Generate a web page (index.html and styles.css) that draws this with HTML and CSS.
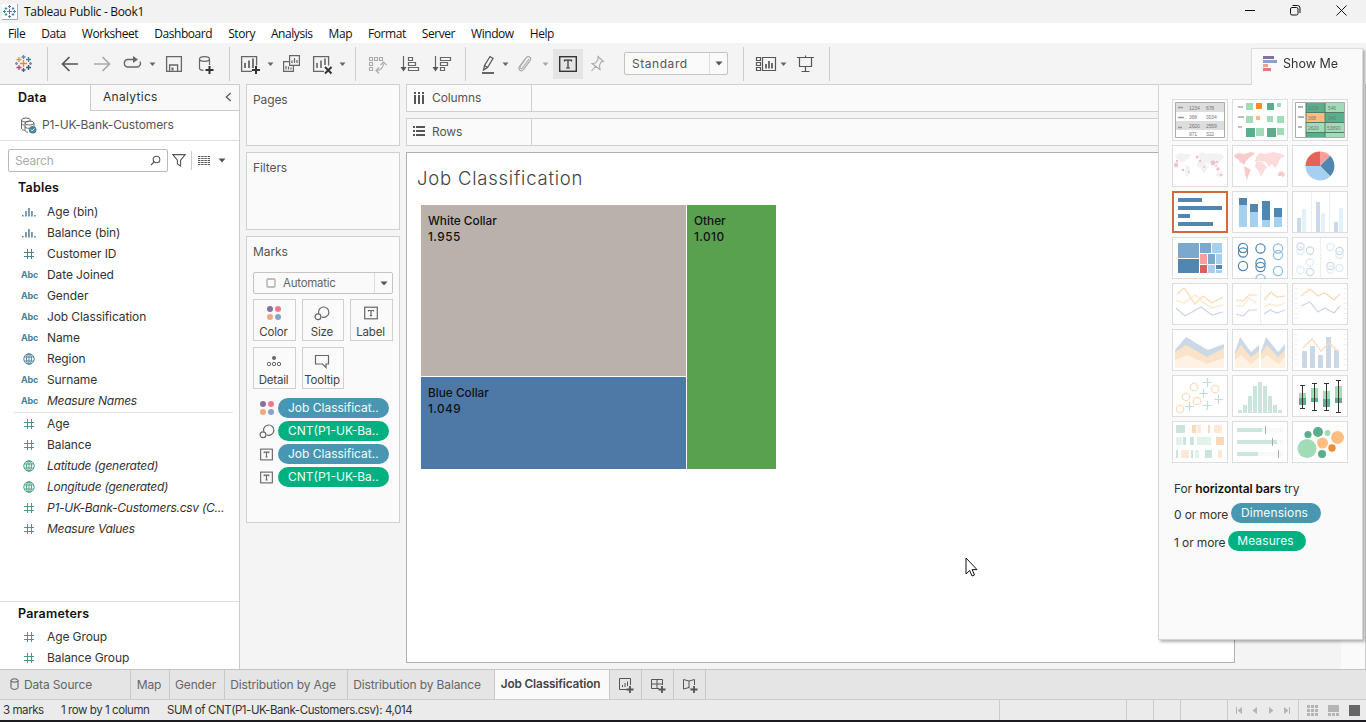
FILE: index.html
```html
<!DOCTYPE html>
<html lang="en">
<head>
<meta charset="utf-8">
<title>Tableau Public - Book1</title>
<link rel="stylesheet" href="styles.css">
</head>
<body>
<svg class="defs" width="0" height="0">
  <symbol id="hash" viewBox="0 0 12 12"><path d="M4.5 1v10M8.5 1v10M1 4.5h10M1 8.5h10" fill="none" stroke="currentColor"/></symbol>
  <symbol id="globe" viewBox="0 0 12 12"><g fill="none" stroke="currentColor"><circle cx="6" cy="6" r="5.2"/><ellipse cx="6" cy="6" rx="2.4" ry="5.2"/><path d="M1.4 4h9.200M1.400 8h9.200M6 1v10" stroke-width=".9"/></g></symbol>
  <symbol id="bins" viewBox="0 0 14 12"><path d="M0 9h1.500v1.500H0zM3.200 5h1.500v5.500H3.200zM6.200 2h1.500v8.500H6.200zM9.200 5h1.500v5.500H9.200zM12.200 9h1.500v1.500h-1.500z" fill="currentColor"/></symbol>
  <symbol id="dots" viewBox="0 0 16 16"><circle cx="4" cy="4" r="3" fill="#86719a"/><circle cx="12" cy="4" r="3" fill="#f2788b"/><circle cx="4" cy="12" r="3" fill="#f0a884"/><circle cx="12" cy="12" r="3" fill="#85a3cb"/></symbol>
  <symbol id="size" viewBox="0 0 16 16"><g fill="none" stroke="#666" stroke-width="1.200"><path d="M4.700 8.600A5.200 5.200 0 1 1 8 12.100"/><circle cx="4" cy="11.800" r="2.900"/></g></symbol>
  <symbol id="label" viewBox="0 0 14 14"><rect x=".7" y="1.200" width="12.600" height="11.600" fill="none" stroke="#666" stroke-width="1.200"/><path d="M4.500 5.600V4.500h5v1.100M7 4.500v5.200M5.900 9.700h2.200" fill="none" stroke="#666" stroke-width="1.200"/></symbol>
  <symbol id="caret" viewBox="0 0 8 5"><path d="M.5.500h7L4 4.500z" fill="currentColor"/></symbol>
</svg>
<div class="app">
  <header class="titlebar">
    <svg class="app-icon" viewBox="0 0 16 16" width="16" height="16"><rect width="15" height="15" fill="#fff"/><path d="M15.500 0v15.500H0" fill="none" stroke="#aaa"/><path d="M7.500 5v5M5 7.500h5M7.500 1v3M6 2.500h3M7.500 11v3M6 12.500h3M1 7.500h3M2.500 6v3M11 7.500h3M12.500 6v3M4 3v3M2.700 4.500h2.600M11 3v3M9.700 4.500h2.600M4 9v3M2.700 10.500h2.600M11 9v3M9.700 10.500h2.600" stroke="#4a87a8"/></svg>
    <span class="title">Tableau Public - Book1</span>
    <svg class="win" viewBox="1240 0 126 23" width="126" height="23" fill="none" stroke="#111"><path d="M1245 10.500h10M1336.500 5.500l10 10M1346.500 5.500l-10 10"/><rect x="1290.500" y="7.500" width="7.500" height="7.500" rx="1.500"/><path d="M1292.500 5.500h5q2.500 0 2.500 2.500v5"/></svg>
  </header>
  <nav class="menu"><span>File</span><span>Data</span><span>Worksheet</span><span>Dashboard</span><span>Story</span><span>Analysis</span><span>Map</span><span>Format</span><span>Server</span><span>Window</span><span>Help</span></nav>

  <div class="toolbar">
    <svg class="sep" viewBox="0 43 47 41" width="47" height="41"><g stroke-width="1.300"><path d="M23.500 60v7M20 63.500h7" stroke="#e8863a"/><path d="M23.500 55v4M21.500 57h4" stroke="#5d89b0"/><path d="M23.500 68v4M21.500 70h4" stroke="#525a86"/><path d="M19 57v5M16.500 59.500h5" stroke="#e49a47"/><path d="M28.500 57v5M26 59.500h5" stroke="#4a7f94"/><path d="M19 65v5M16.500 67.500h5" stroke="#bf4661"/><path d="M28.500 65v5M26 67.500h5" stroke="#345487"/><path d="M16.500 62v3M15 63.500h3M30.500 62v3M29 63.500h3" stroke="#838da9"/></g></svg>
    <svg viewBox="48 43 44 41" width="44" height="41" fill="none" stroke="#555" stroke-width="1.700"><path d="M78 64H63M69.500 57l-7 7 7 7"/></svg>
    <svg viewBox="92 43 24 41" width="24" height="41" fill="none" stroke="#aaa" stroke-width="1.700"><path d="M94 64h15M102.500 57l7 7-7 7"/></svg>
    <svg viewBox="116 43 44 41" width="44" height="41" fill="none" stroke="#666" stroke-width="1.300"><path d="M134 59.500h-6.500a3.800 3.800 0 0 0 0 7.500h9a3.700 3.700 0 0 0 3.500-5.500"/><path d="M133 56l5 3.500-5 3.500z" fill="#666" stroke="none"/><path d="M149.500 62.500h6l-3 3.500z" fill="#666" stroke="none"/></svg>
    <svg viewBox="160 43 28 41" width="28" height="41" fill="none" stroke="#666" stroke-width="1.300"><path d="M166.600 56.600h14.800v14.800h-14.800zM169.600 71v-6h8v6"/><path d="M172.500 67.500v3" stroke-width="2"/></svg>
    <svg class="sep" viewBox="188 43 41 41" width="41" height="41" fill="none" stroke="#666" stroke-width="1.200"><ellipse cx="204.500" cy="59" rx="5" ry="2.300"/><path d="M199.500 59v9c0 1.500 1.500 2.300 4 2.300M209.500 59v6"/><path d="M209.500 66v8M205.500 70h8" stroke="#333" stroke-width="2"/></svg>
    <svg viewBox="230 43 48 41" width="48" height="41" fill="none" stroke="#666" stroke-width="1.300"><path d="M252 71.400h-10.400V56.600h15v9"/><path d="M245 63v5M249 60.500V68M253 58.500V68" stroke-width="1.800"/><path d="M256 66v8M252 70h8" stroke="#333" stroke-width="2"/><path d="M267.500 62.500h6l-3 3.500z" fill="#666" stroke="none"/></svg>
    <svg viewBox="278 43 30 41" width="30" height="41" fill="none" stroke="#666" stroke-width="1.200"><path d="M289 61.600h-5.400v9.800h9.800V66M289.600 55.600h9.800v9.800h-9.800z"/><path d="M292 63v-2.500M294.500 63v-5M297 63v-3M286 69.500V66M288.500 69.500v-3M291 69.500v-2"/></svg>
    <svg class="sep" viewBox="308 43 47 41" width="47" height="41" fill="none" stroke="#666" stroke-width="1.300"><path d="M324 71.400h-10.400V56.600h15v9"/><path d="M317 63v5M321 60.500V68M325 58.500V65" stroke-width="1.600"/><path d="M325 67l6.500 6.500M331.500 67l-6.500 6.500" stroke="#333" stroke-width="2"/><path d="M339.500 62.500h6l-3 3.500z" fill="#666" stroke="none"/></svg>
    <svg viewBox="356 43 38 41" width="38" height="41" fill="none" stroke="#aaa" stroke-width="1.100"><path d="M369.500 57.500h3v3h-3zM374.500 57.500h3v3h-3zM379.500 57.500h3v3h-3zM369.500 62.500h3v3h-3zM369.500 67.500h3v3h-3zM376.500 70.500c4 0 7-3 7-7"/><path d="M379 67.500l-3 3 3 3M380.500 65l3-3 3 3"/></svg>
    <svg viewBox="394 43 32 41" width="32" height="41" fill="none" stroke="#666" stroke-width="1.200"><path d="M403.500 56v13M408.500 57.500h4v3h-4zM408.500 62.500h7v3h-7zM408.500 67.500h10v3h-10z"/><path d="M400.500 67h6l-3 4.500z" fill="#555" stroke="none"/></svg>
    <svg class="sep" viewBox="426 43 39 41" width="39" height="41" fill="none" stroke="#666" stroke-width="1.200"><path d="M435.500 56v13M440.500 57.500h10v3h-10zM440.500 62.500h7v3h-7zM440.500 67.500h4v3h-4z"/><path d="M432.500 67h6l-3 4.500z" fill="#555" stroke="none"/></svg>
    <svg viewBox="466 43 46 41" width="46" height="41" fill="none" stroke="#555" stroke-width="1.200"><path d="M483.500 70l1-4.500 5.500-9 3 2-5.500 9zM484.500 65.500l3 2"/><path d="M482 73h12" stroke="#666" stroke-width="2"/><path d="M502.500 62.500h6l-3 3.500z" fill="#666" stroke="none"/></svg>
    <svg viewBox="512 43 41 41" width="41" height="41" fill="none" stroke="#aaa" stroke-width="1.200"><path d="M529 59l-6.500 9c-1.200 1.500-3.500 0-2.300-1.700l6-8.500c2-2.600 5.700-.2 4 2.500l-6.500 9c-2.500 3-6.300.6-4.200-2.600l5.500-7.700"/><path d="M542.500 62.500h6l-3 3.500z" fill="#aaa" stroke="none"/></svg>
    <div class="active-tool"><svg viewBox="0 0 18 16" width="18" height="16" fill="none" stroke="#333" stroke-width="1.400"><rect x=".7" y=".7" width="16.600" height="14.600"/><path d="M5.500 5.500V4.200h7v1.300M9 4.200v8M7 12h4" stroke-width="1.200"/></svg></div>
    <svg viewBox="583 43 41 41" width="41" height="41" fill="none" stroke="#aaa" stroke-width="1.100"><path d="M598 56.500l5.500 5-2.500.5-1.500 3.500.5 4-8-6 3.500-.5 2.500-3.500zM595.500 66.500l-4 4.500"/></svg>
    <div class="fit-select"><span>Standard</span><i><svg width="8" height="5"><use href="#caret"/></svg></i></div>
    <div class="sep spacer"></div>
    <svg class="sep" viewBox="744 43 85 41" width="85" height="41" fill="none" stroke="#555" stroke-width="1.200"><path d="M756.500 57.500h4v3h-4zM756.500 62.500h4v3h-4zM756.500 67.500h4v3h-4zM762.500 57.500h13v13h-13z"/><path d="M766 64v4.500M769 61v7.500M772 63v5.500" stroke-width="1.700"/><path d="M780.500 62.500h6l-3 3.500z" fill="#666" stroke="none"/><path d="M797 57.500h17M799.500 57.500v9h12v-9M805.500 55.500v2M805.500 66.500v5M801.500 71.500h8"/></svg>
  </div>

  <main class="workspace">
    <aside class="data-pane">
      <div class="pane-tabs"><b>Data</b><div class="analytics"><span>Analytics</span><svg width="7" height="10" viewBox="0 0 8 11"><path d="M6.500 1l-5 4.500 5 4.500" fill="none" stroke="#555" stroke-width="1.400"/></svg></div></div>
      <div class="source"><svg width="17" height="17" viewBox="0 0 17 17" fill="none" stroke="#666"><ellipse cx="6" cy="3" rx="4.500" ry="2"/><path d="M1.500 3v8c0 1.500 1.500 2 3 2.500M1.500 6c0 1.500 1.500 2 3 2.300"/><ellipse cx="9.500" cy="6" rx="4.500" ry="2"/><path d="M5 6v7c0 1.300 1 2 3 2.400M14 6v3M5 9.500c0 1 1.500 1.800 4 1.800"/><circle cx="12.700" cy="12.700" r="3.800" fill="#3f86a3" stroke="none"/><path d="M11 12.700l1.300 1.300 2.200-2.500" stroke="#fff"/></svg><span>P1-UK-Bank-Customers</span></div>
      <div class="search-row">
        <div class="search"><span>Search</span><svg width="11" height="11" viewBox="0 0 11 11" fill="none" stroke="#555" stroke-width="1.100"><circle cx="6.500" cy="4.500" r="3.300"/><path d="M4 7L1 10"/></svg></div>
        <svg class="funnel" width="14" height="13" viewBox="0 0 14 13" fill="none" stroke="#555" stroke-width="1.100"><path d="M.8.600h12.400L8.600 6.200V12L5.400 10V6.200z"/></svg>
        <svg class="list-icon" width="12" height="11" viewBox="0 0 12 11" stroke="#555" stroke-dasharray="2.400 .8"><path d="M0 1.500h12M0 3.500h12M0 5.500h12M0 7.500h12M0 9.500h12"/></svg>
        <svg class="view-caret" width="8" height="5"><use href="#caret"/></svg>
      </div>
      <h2>Tables</h2>
      <ul class="fields dims">
        <li><svg class="wide"><use href="#bins"/></svg>Age (bin)</li>
        <li><svg class="wide"><use href="#bins"/></svg>Balance (bin)</li>
        <li><svg><use href="#hash"/></svg>Customer ID</li>
        <li><b>Abc</b>Date Joined</li>
        <li><b>Abc</b>Gender</li>
        <li><b>Abc</b>Job Classification</li>
        <li><b>Abc</b>Name</li>
        <li><svg><use href="#globe"/></svg>Region</li>
        <li><b>Abc</b>Surname</li>
        <li><b>Abc</b><em>Measure Names</em></li>
      </ul>
      <ul class="fields meas">
        <li><svg><use href="#hash"/></svg>Age</li>
        <li><svg><use href="#hash"/></svg>Balance</li>
        <li><svg><use href="#globe"/></svg><em>Latitude (generated)</em></li>
        <li><svg><use href="#globe"/></svg><em>Longitude (generated)</em></li>
        <li><svg><use href="#hash"/></svg><em>P1-UK-Bank-Customers.csv (C...</em></li>
        <li><svg><use href="#hash"/></svg><em>Measure Values</em></li>
      </ul>
      <section class="params">
        <h2>Parameters</h2>
        <ul class="fields meas-params">
          <li><svg><use href="#hash"/></svg>Age Group</li>
          <li><svg><use href="#hash"/></svg>Balance Group</li>
        </ul>
      </section>
    </aside>

    <div class="cards">
      <section class="card pages">Pages</section>
      <section class="card filters">Filters</section>
      <section class="card marks">Marks
        <div class="mark-type"><svg width="10" height="10"><rect x="1" y="1" width="8" height="8" rx="1" fill="none" stroke="#aaa" stroke-width="1.300"/></svg><span>Automatic</span><i><svg width="8" height="5"><use href="#caret"/></svg></i></div>
        <div class="mark-buttons">
          <button><svg width="16" height="16"><use href="#dots"/></svg>Color</button>
          <button><svg width="16" height="16"><use href="#size"/></svg>Size</button>
          <button><svg width="14" height="16"><use href="#label"/></svg>Label</button>
          <button><svg width="16" height="16" fill="none" stroke="#666"><circle cx="8" cy="5" r="2" fill="#666" stroke="none"/><circle cx="3" cy="11" r="1.700"/><circle cx="8" cy="11" r="1.700"/><circle cx="13" cy="11" r="1.700"/></svg>Detail</button>
          <button><svg width="16" height="16" fill="none" stroke="#666" stroke-width="1.200"><path d="M1.500 2.500h13v8.500h-2.500v3.500L8.500 11h-7z"/></svg>Tooltip</button>
        </div>
        <div class="pills">
          <div><svg width="16" height="16"><use href="#dots"/></svg><span class="pill blue">Job Classificat..</span></div>
          <div><svg width="16" height="16"><use href="#size"/></svg><span class="pill green">CNT(P1-UK-Ba..</span></div>
          <div><svg width="15" height="13"><use href="#label"/></svg><span class="pill blue after-label">Job Classificat..</span></div>
          <div><svg width="15" height="13"><use href="#label"/></svg><span class="pill green after-label">CNT(P1-UK-Ba..</span></div>
        </div>
      </section>
    </div>

    <div class="view-area">
      <div class="shelf"><label><svg width="12" height="13" viewBox="0 0 12 13"><path d="M2 0v2M6 0v2M10 0v2M2 3v9M6 3v9M10 3v9" stroke="#555" stroke-width="2"/></svg>Columns</label></div>
      <div class="shelf"><label><svg width="12" height="12" viewBox="0 0 12 12"><path d="M0 1h2M0 5h2M0 9h2M3 1h9M3 5h9M3 9h9" stroke="#555" stroke-width="2"/></svg>Rows</label></div>
      <section class="sheet">
        <h1>Job Classification</h1>
        <div class="treemap">
          <div class="white-collar">White Collar<br><span>1.955</span></div>
          <div class="other">Other<br><span>1.010</span></div>
          <div class="blue-collar">Blue Collar<br><span>1.049</span></div>
        </div>
      </section>
    </div>
    <div class="gutter"></div>
  </main>

  <footer class="sheet-tabs">
    <span class="ds"><svg width="9" height="12" viewBox="0 0 9 12" fill="none" stroke="#555"><ellipse cx="4.500" cy="2.500" rx="3.500" ry="1.700"/><path d="M1 2.500v7c0 2.400 7 2.400 7 0v-7"/></svg>Data Source</span>
    <span class="map">Map</span><span class="gender">Gender</span><span class="dage">Distribution by Age</span><span class="dbal">Distribution by Balance</span><b class="current">Job Classification</b>
    <span class="add"><svg width="16" height="16" viewBox="0 0 16 16" fill="none" stroke="#555"><path d="M9 12.500H1.500v-11h11V8M4.500 8v2M7 6v4M9.500 4.500V9"/><path d="M12 9v7M8.500 12.500h7" stroke-width="1.800"/></svg></span>
    <span class="add"><svg width="16" height="16" viewBox="0 0 16 16" fill="none" stroke="#555"><path d="M9 11.500H1.500v-9h11V8M7 2.500v9M1.500 7h11"/><path d="M12 9v7M8.500 12.500h7" stroke-width="1.800"/></svg></span>
    <span class="add"><svg width="16" height="16" viewBox="0 0 16 16" fill="none" stroke="#555"><path d="M8 11.500l-1-1-5.500 1.500V2.500L7 4l5.500-1.500V8M7 4v7"/><path d="M12 9v7M8.500 12.500h7" stroke-width="1.800"/></svg></span>
  </footer>
  <footer class="status">
    <span class="s1">3 marks</span><span class="s2">1 row by 1 column</span><span class="s3">SUM of CNT(P1-UK-Bank-Customers.csv): 4,014</span>
    <i class="c1"></i><i class="c2"></i><i class="c3"></i><i class="c4"></i>
    <svg viewBox="1227 699 139 21" width="139" height="21" fill="#b4b4b4"><path d="M1227 699h1v21h-1zM1298 699h1v21h-1z" fill="#ccc"/><path d="M1236 706h1v7h-1zM1242 706v7l-4.500-3.500zM1257 706v7l-4.500-3.500zM1269 706v7l4.500-3.500zM1284 706v7l4.500-3.500zM1289 706h1v7h-1z"/><path d="M1307 704h3v3h-3zM1311 704h3v3h-3zM1315 704h3v3h-3zM1307 708h3v3h-3zM1311 708h3v3h-3zM1315 708h3v3h-3zM1307 712h3v3h-3zM1311 712h3v3h-3zM1315 712h3v3h-3zM1328 704h11v7h-11zM1328 712h3v3h-3zM1332 712h3v3h-3zM1336 712h3v3h-3z"/><path d="M1349 704h11v11h-11z" fill="#666"/></svg>
  </footer>

  <aside class="show-me">
    <div class="sm-tab"><svg width="14" height="16"><path d="M0 0h11v3H0z" fill="#86719a"/><path d="M0 4h14v3H0z" fill="#85a3cb"/><path d="M0 8h5v3H0z" fill="#eaa580"/><path d="M0 12h8v3H0z" fill="#ea7386"/></svg>Show Me</div>
    <div class="sm-body">
      <div class="thumbs">
        <svg viewBox="0 0 56 42"><path d="M3.500 3.500h49v35h-49z" fill="#fff" stroke="#aaa"/><path d="M4 4h48v9H4zM4 22h48v9H4z" fill="#ddd"/><path d="M6 8.500h5M6 18.500h6M6 28.500h4" stroke="#999" stroke-width="1.500"/><g class="tiny"><text x="17" y="10.500">1234</text><text x="34" y="10.500">678</text><text x="17" y="20">368</text><text x="34" y="20">3034</text><text x="17" y="29">2620</text><text x="34" y="29">2559</text><text x="17" y="37">971</text><text x="34" y="37">322</text></g></svg>
        <svg viewBox="0 0 56 42"><path d="M6 8h5M6 18h6M6 28h4" stroke="#aaa" stroke-width="1.500"/><path d="M14 4h7v7h-7zM45 4h4v4h-4zM14 17h7v7h-7zM35 17h6v6h-6zM45 17h7v7h-7zM24 29h8v8h-8zM45 29h7v7h-7z" fill="#a0dcb8"/><path d="M35 4h7v7h-7zM14 29h9v9h-9zM35 29h9v9h-9z" fill="#59ae8b"/><path d="M24 4h6v6h-6z" fill="#ef8d38"/><path d="M24 17h4v4h-4z" fill="#ffbd80"/></svg>
        <svg viewBox="0 0 56 42"><path d="M3.500 3.500h49v35h-49z" fill="#fff" stroke="#aaa"/><path d="M6 8h5M6 18h6M6 28h4" stroke="#999" stroke-width="1.500"/><path d="M14 4h19v34H14zM33 4h19v34H33z" fill="#59ae8b"/><path d="M33 4h19v9H33zM14 24h38v9H14zM33 34h19v4H33z" fill="#a0dcb8"/><path d="M14 14h19v9H14z" fill="#ffbd80"/><path d="M14 4v34M33 4v34M14 13.500h38M14 23.500h38M14 33.500h38" stroke="#557a69"/><g class="tiny"><text x="16" y="10.500">1234</text><text x="36" y="10.500">546</text><text x="16" y="21">368</text><text x="36" y="21">340</text><text x="16" y="31">2620</text><text x="35" y="31">53890</text></g></svg>
        <svg viewBox="0 0 56 42"><path d="M2 11l6-3 6 1 5 0-2 4-4 3-3 2-4-4zM14 20l4 2 0 5-3 6-2-6zM26 10l4-3 4 2 6-1 9 1 3 3-4 5-3 4-3-2-2-2-3 2-4-2-4 0zM26 16l7 1 3 5-4 7-3-5-4-3zM45 27l5-1 2 4-4 2-4-1z" fill="#f2f2f2"/><g fill="#ecc3cb"><circle cx="4" cy="20" r="2.200"/><circle cx="5" cy="16" r="1.300"/><circle cx="25" cy="12" r="1.500"/><circle cx="28" cy="16" r="1.300"/><circle cx="11" cy="25" r="1.300"/><circle cx="32" cy="22" r="1"/><circle cx="41" cy="18" r="2.400"/><circle cx="45" cy="17" r="1.300"/><circle cx="44" cy="21" r="1"/><circle cx="46" cy="24" r="1.800"/><circle cx="49" cy="30" r="1.300"/><circle cx="17" cy="27" r="1"/></g></svg>
        <svg viewBox="0 0 56 42"><path d="M2 10l5-2 5 1 7-2 4 1-3 3-3 2-3 3-2 4-4-3-2-3-3-1zM12 21l4 2 3 2-3 6-1 5-2-7z" fill="#f7cbcb"/><path d="M24 12l4-4 5 1 8-2 9 2 3 2-5 3-2 5-3 4-3-4-3 3-3-5-6-1-5 1zM24 17l6 0 5 5-3 4-3 6-3-7-3-3z" fill="#fbdcda"/><path d="M46 28l4-2 3 3-1 3-3-1-3 0z" fill="#f7cbcb"/></svg>
        <svg viewBox="0 0 56 42"><path d="M28 21V6.500A14.500 14.500 0 0 0 13.500 21z" fill="#e46257"/><path d="M28 21V6.500A14.500 14.500 0 0 1 38.200 10.800z" fill="#fb9f9c"/><path d="M28 21L38.200 10.800A14.500 14.500 0 0 1 38.200 31.200z" fill="#5186b1"/><path d="M28 21H13.500A14.500 14.500 0 0 0 38.200 31.200z" fill="#a5d0ef"/></svg>
        <svg class="selected" viewBox="0 0 56 42"><path d="M6 7h24v4H6zM6 15h44v4H6zM6 23h12v4H6zM6 31h35v4H6z" fill="#5186b1"/></svg>
        <svg viewBox="0 0 56 42"><path d="M7 14h8v22H7zM18 21h8v15h-8zM30 29h8v7h-8zM42 26h8v10h-8z" fill="#a5d0ef"/><path d="M7 7h8v7H7zM18 13h8v8h-8zM30 10h8v19h-8zM42 17h8v9h-8z" fill="#5186b1"/></svg>
        <svg viewBox="0 0 56 42"><path d="M19.500 1v40M37.500 1v40" stroke="#eee"/><path d="M5 27h4v14H5zM24 11h4v30h-4zM42 31h4v10h-4z" fill="#cbd9e6"/><path d="M10 18h4v23h-4zM29 22h4v19h-4zM47 17h4v24h-4z" fill="#e3f1fb"/></svg>
        <svg viewBox="0 0 56 42"><path d="M6 6h21v15H6zM28 6h11v10H28zM36 17h7v10h-7z" fill="#7ba9ce"/><path d="M40 6h10v10H40zM44 17h6v10h-6zM36 28h7v8h-7zM44 33h6v3h-6z" fill="#a5d0ef"/><path d="M6 22h21v14H6zM44 28h6v4h-6z" fill="#5186b1"/><path d="M28 17h7v10h-7z" fill="#fb9f9c"/><path d="M28 28h7v8h-7z" fill="#db6158"/></svg>
        <svg viewBox="0 0 56 42" fill="none" stroke="#5186b1" stroke-width="1.200"><circle cx="11" cy="11" r="4.600"/><circle cx="11" cy="15.500" r="4.600"/><circle cx="11" cy="29" r="4.600"/><circle cx="28.500" cy="11.500" r="4.600"/><circle cx="28.500" cy="26" r="4.600"/><circle cx="28.500" cy="30" r="4.600"/><g stroke="#8abde0"><circle cx="46" cy="11.500" r="4.600"/><circle cx="46" cy="18" r="4.600"/><circle cx="46" cy="34" r="4.600"/><circle cx="28.500" cy="42" r="4.600"/></g></svg>
        <svg viewBox="0 0 56 42" fill="none" stroke="#cbd9e6" stroke-width="1.200"><path d="M28.500 1v40" stroke="#eee"/><circle cx="8.500" cy="9.500" r="3.600"/><circle cx="18" cy="13.500" r="3.600"/><circle cx="18" cy="35" r="3.600"/><circle cx="47.500" cy="14" r="3.600"/><circle cx="38.500" cy="29" r="3.600"/><g stroke="#deeaf4"><circle cx="8.500" cy="14" r="3.600"/><circle cx="18" cy="25.500" r="3.600"/><circle cx="8.500" cy="33" r="3.600"/><circle cx="38.500" cy="10" r="3.600"/><circle cx="47.500" cy="18" r="3.600"/><circle cx="47.500" cy="31" r="3.600"/><circle cx="38.500" cy="32.500" r="3.600"/></g></svg>
        <svg viewBox="0 0 56 42" fill="none" stroke-width="1.200"><path d="M5 11l7-6 11 16 8-8 9 7 11-6" stroke="#fad9b4"/><path d="M4 17l8 3 11-8 9 8 8 5 11-3" stroke="#fde5cc"/><path d="M4 25l9 8 16-9 11 8 11-3" stroke="#cbd6e4"/></svg>
        <svg viewBox="0 0 56 42" fill="none" stroke-width="1.200"><path d="M28.500 1v40" stroke="#eee"/><path d="M4 17l7 1 6-6h8M32 17l7-8 6 5 8-1" stroke="#fad9b4"/><path d="M4 23h7l6-8 7 5M32 24l6-3 7 2 8-3" stroke="#fde5cc"/><path d="M4 31l7 2 6-6h8M32 31l6-4 7 3 8-3" stroke="#cbd6e4"/></svg>
        <svg viewBox="0 0 56 42" fill="none" stroke-width="1.200"><path d="M9 13l9-7 8 7 7-3 9 7 6-6" stroke="#fad9b4"/><path d="M9 23l9-4 8 10 7-4 9 5 6-7" stroke="#cbd6e4"/><path d="M4 5v34M53 5v34" stroke="#ddd" stroke-width="3" stroke-dasharray=".6 4.400"/></svg>
        <svg viewBox="0 0 56 42"><path d="M3 21L14 8l22 13 16-6v24H3z" fill="#cbd9e6"/><path d="M3 23L14 16l21 12 17-9v20H3z" fill="#fbe3c9"/><path d="M3 31l12-5 20 9 17-6v10H3z" fill="#fef2e4"/></svg>
        <svg viewBox="0 0 56 42"><path d="M3 23L8 8l11 15 8-7v23H3zM29 23l5-15 12 15 7-8v24H29z" fill="#cbd9e6"/><path d="M3 25l6-9 10 12 8-6v17H3zM29 25l6-9 11 12 7-7v18H29z" fill="#fbe3c9"/><path d="M3 31l6-5 10 9 8-7v11H3zM29 31l6-5 11 9 7-7v11H29z" fill="#fef2e4"/></svg>
        <svg viewBox="0 0 56 42"><path d="M10 22h5v17h-5zM18 17h5v22h-5zM26 26h5v13h-5zM34 8h5v31h-5zM42 21h5v18h-5z" fill="#cbd9e6"/><path d="M11 19l9-9 9 12 8-8 10 9" fill="none" stroke="#fad9b4" stroke-width="1.200"/><path d="M4 5v34M53 5v34" stroke="#ddd" stroke-width="3" stroke-dasharray=".6 4.400"/></svg>
        <svg viewBox="0 0 56 42" fill="none" stroke-width="1.200"><g stroke="#fbdcbd"><circle cx="8" cy="34" r="3.700"/><circle cx="14" cy="22" r="3.700"/><circle cx="22" cy="12" r="3.700"/><circle cx="25" cy="26" r="3.700"/><circle cx="43" cy="14" r="3.700"/></g><path d="M17.500 27v9M13 31.500h9M31.500 14v9M27 18.500h9M35.500 3v9M31 7.500h9M35.500 26v9M31 30.500h9M46.500 20v9M42 24.500h9" stroke="#bfe0d3"/></svg>
        <svg viewBox="0 0 56 42"><path d="M6 35h4v3H6zM11 30h4v8h-4zM16 21h4v17h-4zM21 11h4v27h-4zM26 7h4v31h-4zM31 11h4v27h-4zM36 21h4v17h-4zM41 30h4v8h-4zM46 35h4v3h-4z" fill="#cbe5dc"/></svg>
        <svg viewBox="0 0 56 42"><path d="M7 18h7v12H7zM19 13h7v14h-7zM31 16h7v16h-7zM43 11h7v17h-7z" fill="#a0dcb8"/><path d="M7 23h7v7H7zM19 23h7v4h-7zM31 24h7v8h-7zM43 23h7v5h-7z" fill="#59ae8b"/><path d="M10.500 10v24M22.500 8v27M34.500 8v28M46.500 5v32M8 10.500h5M8 33.500h5M20 8.500h5M20 35.500h5M32 8.500h5M32 35.500h5M44 5.500h5M44 37.500h5" stroke="#333"/></svg>
        <svg viewBox="0 0 56 42"><path d="M4 4h9v8H4zM11 16h3v8h-3zM18 16h4v8h-4zM4 29h2v8H4zM19 29h2v8h-2zM33 29h7v8h-7z" fill="#cbe5dc"/><path d="M4 16h6v8H4zM25 16h14v8H25zM23 29h4v8h-4z" fill="#e0f2ea"/><path d="M20 4h4v8h-4zM36 4h2v8h-2zM44 16h8v8h-8z" fill="#fad8bb"/><path d="M25 4h4v8h-4zM42 4h8v8h-8zM9 29h8v8H9zM46 29h4v8h-4z" fill="#fde9d5"/></svg>
        <svg viewBox="0 0 56 42"><path d="M5 7h46v4H5zM5 19h46v4H5zM5 31h46v4H5z" fill="#f8f8f8"/><path d="M5 7h25v4H5zM5 19h40v4H5zM5 31h21v4H5z" fill="#cbe5dc"/><path d="M33.500 5v8M40.500 17v8M46.500 29v8" stroke="#aaa"/></svg>
        <svg viewBox="0 0 56 42"><circle cx="15" cy="27.500" r="9.500" fill="#a0dcb8"/><circle cx="35.500" cy="12" r="3" fill="#a0dcb8"/><g fill="#59ae8b"><circle cx="16" cy="13.500" r="3.600"/><circle cx="26" cy="11" r="5"/><circle cx="30" cy="33" r="4"/></g><circle cx="45.500" cy="16.500" r="6.500" fill="#ffbd80"/><circle cx="30.500" cy="22" r="5.500" fill="#ffbd80"/><circle cx="40" cy="27" r="3.700" fill="#ef8d38"/></svg>
      </div>
      <p class="hint">For <b>horizontal bars</b> try</p>
      <p class="need"><span class="n0">0 or more</span><span class="pill blue dim">Dimensions</span></p>
      <p class="need"><span class="n1">1 or more</span><span class="pill green mea">Measures</span></p>
    </div>
  </aside>
  <svg class="cursor" width="14" height="20" viewBox="0 0 14 20"><path d="M1 1v16l3.700-3.500 2.300 5.500 2.500-1-2.300-5.400H12z" fill="#fff" stroke="#111"/></svg>
</div>
</body>
</html>
```
FILE: styles.css
```css
* { box-sizing: border-box; }
body { margin: 0; }
.defs { position: absolute; }
.app {
  position: relative;
  width: 1366px;
  height: 722px;
  overflow: hidden;
  display: flex;
  flex-direction: column;
  background: #f4f4f4;
  border-bottom: 2px solid #1c1c20;
  font: 12px/16px Inter, "Open Sans", sans-serif;
  color: #333;
}
svg { display: block; flex: none; }
span, b { white-space: nowrap; }
i { display: block; }

.titlebar, .menu { font-family: "Open Sans", "Noto Sans", sans-serif; color: #111; flex: none; display: flex; align-items: center; }
.titlebar { height: 23px; background: #f2f2f2; padding-left: 2px; }
.title { margin-left: 6px; font-size: 12px; letter-spacing: -.3px; }
.win { margin-left: auto; }
.menu { height: 20px; background: #fff; padding: 1px 0 0 8px; gap: 16px; font-size: 12px; letter-spacing: -.44px; }

.toolbar { height: 41px; flex: none; display: flex; align-items: center; }
.sep { box-sizing: content-box; background: linear-gradient(#ccc, #ccc) right 4px / 1px 34px no-repeat; padding-right: 1px; }
.spacer { width: 15px; height: 41px; }
.active-tool { width: 30px; height: 30px; background: #e4e4e4; display: flex; align-items: center; justify-content: center; }
.fit-select { width: 104px; height: 23px; border: 1px solid #c4c4c4; border-radius: 2px; background: #fafafa; display: flex; align-items: center; color: #555; padding-left: 7px; letter-spacing: .55px; }
.fit-select i, .mark-type i { margin-left: auto; height: 100%; width: 18px; border-left: 1px solid #ddd; display: flex; align-items: center; justify-content: center; color: #555; }

.workspace { height: 585px; flex: none; display: flex; }
.data-pane { width: 240px; background: #fff; border-right: 1px solid #ccc; border-top: 1px solid #ccc; display: flex; flex-direction: column; }
.pane-tabs { display: flex; height: 26px; flex: none; }
.pane-tabs b { width: 90px; padding: 5px 0 0 18px; color: #111; font-weight: 600; font-size: 12.500px; letter-spacing: .2px; }
.analytics { flex: 1; display: flex; align-items: center; justify-content: space-between; border-left: 1px solid #ccc; border-bottom: 1px solid #ccc; background: #f9f9f9; padding: 0 7px 1px 12px; letter-spacing: .3px; }
.source { height: 30px; flex: none; display: flex; align-items: center; gap: 5px; padding: 0 0 1px 20px; border-bottom: 1px solid #ddd; color: #555; letter-spacing: -.12px; }
.search-row { display: flex; align-items: center; padding: 8px 0 0 8px; flex: none; color: #555; }
.search { width: 160px; height: 23px; border: 1px solid #bbb; border-radius: 2px; display: flex; align-items: center; justify-content: space-between; padding: 0 6px; color: #aaa; letter-spacing: -.2px; }
.funnel { margin: 0 5px 0 4px; }
.list-icon { box-sizing: content-box; padding: 4px 0 4px 6px; border-left: 1px solid #ccc; }
.view-caret { margin-left: 8px; }
h2 { margin: 0; padding-left: 18px; font-size: 12.500px; font-weight: 600; line-height: 16px; color: #111; letter-spacing: .2px; }
.search-row + h2 { margin-top: 8px; }
.fields { list-style: none; margin: 0; padding: 0 0 0 20px; }
.fields li { height: 21px; display: flex; align-items: center; white-space: nowrap; letter-spacing: -.1px; }
.fields em { letter-spacing: -.26px; }
.fields svg { width: 12px; height: 12px; margin: 0 12px 0 3px; }
.fields .wide { width: 14px; margin: 0 11px 0 2px; }
.fields b { width: 27px; padding: 1px 0 0 1px; font-size: 9px; font-weight: 700; letter-spacing: -.2px; }
.dims { margin-top: 5px; }
.dims svg, .dims b { color: #4c8098; }
.meas svg, .meas-params svg { color: #42a07e; }
.meas { margin: 1px 6px 0 14px; padding: 0 0 0 6px; border-top: 1px solid #ddd; }
.params { margin-top: auto; height: 68px; border-top: 1px solid #ddd; }
.params h2 { padding-top: 4px; }
.params .fields { padding-top: 4px; }

.cards { width: 154px; margin-left: 6px; display: flex; flex-direction: column; gap: 6px; }
.card { border: 1px solid #d0d0d0; background: #fafafa; padding: 7px 6px; color: #555; letter-spacing: -.1px; }
.pages { height: 62px; }
.filters { height: 78px; }
.marks { height: 287px; }
.mark-type { margin-top: 12px; width: 140px; height: 22px; border: 1px solid #c4c4c4; border-radius: 2px; display: flex; align-items: center; padding-left: 12px; gap: 7px; font-size: 11.500px; color: #666; letter-spacing: -.25px; }
.mark-buttons { display: grid; grid-template-columns: 43px 42px 43px; gap: 6px; margin-top: 5px; }
.mark-buttons button { height: 42px; border: 1px solid #d0d0d0; background: #fafafa; display: flex; flex-direction: column; align-items: center; justify-content: space-between; padding: 5px 2px 0 0; font: 11.500px/16px Inter, sans-serif; letter-spacing: -.2px; color: #444; }
.pills { margin-top: 9px; display: grid; gap: 3px; }
.pills div { display: flex; align-items: center; gap: 3px; padding-left: 6px; }
.pill { height: 20px; border-radius: 10px; color: #f0ffff; line-height: 20px; font-size: 12px; letter-spacing: 0; }
.pills .pill { width: 111px; padding-left: 10px; }
.pills .after-label { margin-left: 1px; }
.blue { background: #4996b2; }
.green { background: #00b180; }

.view-area { margin-left: 6px; width: 829px; display: flex; flex-direction: column; gap: 6px; }
.shelf { width: 958px; height: 28px; flex: none; border: 1px solid #d0d0d0; background: #fafafa; }
.shelf label { width: 125px; height: 100%; border-right: 1px solid #d0d0d0; display: flex; align-items: center; gap: 7px; padding-left: 6px; color: #555; letter-spacing: -.1px; }
.sheet { height: 511px; background: #fff; border: 1px solid #b0b0b0; padding: 12px 0 0 14px; }
h1 { margin: 0 0 0 -4px; font-size: 18.500px; line-height: 26px; font-weight: 300; color: #444; letter-spacing: .78px; }
.treemap { width: 355px; height: 264px; margin-top: 14px; display: grid; grid-template: 171px 92px / 265px 89px; gap: 1px; color: #111; font: 500 11.800px/16px Inter, sans-serif; }
.treemap > div { padding: 8px 7px; }
.treemap span { letter-spacing: .45px; }
.white-collar { background: #bab0ac; }
.other { background: #59a14f; grid-row: span 2; }
.blue-collar { background: #4e79a7; }
.gutter { width: 25px; margin: 0 0 0 auto; background: #fafafa; border-right: 1px solid #ccc; }

.sheet-tabs { height: 30px; flex: none; display: flex; background: #e5e5e5; border-top: 1px solid #c4c4c4; color: #666; line-height: 30px; letter-spacing: -.14px; }
.sheet-tabs > * { flex: none; border-right: 1px solid #c8c8c8; text-align: center; }
.ds { width: 131px; display: flex; align-items: center; gap: 5px; padding-left: 10px; }
.ds svg { margin-bottom: 2px; }
.map { width: 39px; padding-right: 2px; }
.gender { width: 55px; padding-right: 3px; }
.dage { width: 123px; padding-right: 6px; }
.dbal { width: 147px; padding-right: 8px; }
.current { width: 115px; background: #fafafa; font-weight: 600; font-size: 11.800px; line-height: 28px; color: #444; padding-right: 3px; }
.sheet-tabs .add { width: 32px; display: flex; align-items: center; justify-content: center; }
.status { height: 21px; flex: none; display: flex; background: #ebebeb; border-top: 1px solid #ccc; line-height: 20px; font-size: 11.500px; letter-spacing: -.43px; }
.s1 { width: 58px; padding-left: 3px; }
.s2 { width: 106px; padding-left: 3px; }
.s3 { width: 835px; padding-left: 3px; }
.status i { border-left: 1px solid #ccc; }
.c1 { width: 127px; }
.c2 { width: 27px; }
.c3 { width: 27px; }
.c4 { width: 47px; }

.show-me { position: absolute; left: 1158px; top: 48px; width: 205px; height: 592px; filter: drop-shadow(2px 2px 1.500px rgba(0,0,0,.3)); }
.sm-tab { position: relative; z-index: 1; width: 112px; height: 37px; margin-left: 93px; background: #fafafa; border: 1px solid #ddd; border-bottom: 0; display: flex; align-items: center; gap: 6px; padding: 0 0 7px 11px; font-size: 12.500px; color: #333; }
.sm-body { height: 556px; margin-top: -1px; background: #fafafa; border: 1px solid #d4d4d4; padding: 14px 0 0 13px; }
.thumbs { display: grid; grid-template-columns: repeat(3, 56px); grid-auto-rows: 42px; gap: 4px; }
.thumbs svg { width: 56px; height: 42px; background: #fff; box-shadow: inset 0 0 0 1px #ddd; }
.thumbs .selected { box-shadow: inset 0 0 0 2px #d0693b; }
.tiny { font: 5px "Liberation Sans", sans-serif; fill: #777; letter-spacing: -.1px; }
.hint { margin: 18px 0 0 2px; letter-spacing: -.1px; }
.hint b { color: #111; font-weight: 600; }
.need { margin: 6px 0 8px 2px; height: 20px; display: flex; align-items: center; letter-spacing: -.1px; }
.need .pill { text-align: center; letter-spacing: .1px; }
.need .dim { width: 90px; padding-right: 3px; }
.need .mea { width: 78px; padding-right: 3px; }
.n0 { width: 57px; padding-top: 4px; }
.n1 { width: 54px; padding-top: 4px; }
.cursor { position: absolute; left: 965px; top: 557px; }
```
